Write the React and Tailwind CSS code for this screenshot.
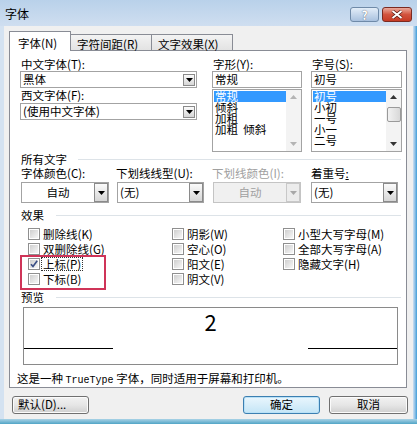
import React from "react";

// small dropdown arrow button used by the combo boxes
const DropBtn = ({ big, disabled }) => (
  <div
    className={`${big ? "w-[14px] h-[19px]" : "w-[12px] h-[12px] mr-[1px]"} shrink-0 flex items-center justify-center border ${
      disabled ? "border-[#c8c8c8] bg-[#ececec]" : "border-[#8a8a8a] bg-linear-to-b from-[#fbfbfb] to-[#d6d6d6]"
    }`}
  >
    <svg width="7" height="4" viewBox="0 0 7 4">
      <path d="M0 0h7L3.5 4z" fill={disabled ? "#a8a8a8" : "#000"} />
    </svg>
  </div>
);

const Combo = ({ text, w, big, center, disabled }) => (
  <div
    className={`${w} ${big ? "h-[21px]" : "h-[17px]"} flex items-center border ${
      disabled ? "border-[#c4c4c4] bg-[#f0f0f0] text-[#a0a0a0]" : "border-[#a3a3a3] bg-white"
    }`}
  >
    <span className={`flex-1 leading-none ${center ? "text-center" : "pl-[2px]"}`}>{text}</span>
    <DropBtn big={big} disabled={disabled} />
  </div>
);

const Check = ({ checked }) => (
  <span className="w-[12px] h-[12px] shrink-0 border border-[#8f8f8f] bg-white p-[1px] flex">
    <span className="flex-1 flex items-center justify-center bg-linear-to-br from-[#cfcfcf] to-[#f7f7f7]">
      {checked && (
        <svg width="8" height="8" viewBox="0 0 8 8">
          <path d="M1 4.2l2 2.3L7.2 0.8" stroke="#3b4f85" strokeWidth="1.7" fill="none" />
        </svg>
      )}
    </span>
  </span>
);

const Opt = ({ label, checked, focus }) => (
  <div className="flex items-center h-[15px] gap-[2px]">
    <Check checked={checked} />
    <span className={`px-[1px] leading-[12px] ${focus ? "outline outline-1 outline-dotted outline-[#333]" : ""}`}>
      {label}
    </span>
  </div>
);

const ListBox = ({ items, thumb }) => (
  <div className="h-[63px] mt-[1px] border border-[#a3a3a3] bg-white flex overflow-hidden">
    <div className="flex-1 pt-[1px] pl-[1px]">
      {items.map((t, i) => (
        <div
          key={i}
          className={`h-[11px] leading-[11px] pl-[1px] whitespace-pre ${i === 0 ? "bg-[#3399ff] text-white" : ""}`}
        >
          {t}
        </div>
      ))}
    </div>
    <div className="w-[15px] bg-[#f3f3f3] flex flex-col items-center py-[5px]">
      <svg width="7" height="4" viewBox="0 0 7 4">
        <path d="M0 4h7L3.5 0z" fill={thumb ? "#333" : "#b4b4b4"} />
      </svg>
      {thumb && (
        <div className="mt-[8px] w-[14px] h-[15px] border border-[#9a9a9a] rounded-[2px] bg-linear-to-r from-[#f2f2f2] to-[#d8d8d8]" />
      )}
      <div className="flex-1" />
      <svg width="7" height="4" viewBox="0 0 7 4">
        <path d="M0 0h7L3.5 4z" fill={thumb ? "#333" : "#b4b4b4"} />
      </svg>
    </div>
  </div>
);

const Section = ({ title, lineMl }) => (
  <div className="flex items-center h-[13px] pr-[5px]">
    <span className="leading-[13px] pl-[1px]">{title}</span>
    <div className={`flex-1 h-px bg-[#dde3e8] ${lineMl}`} />
  </div>
);

const Button = ({ children, w, primary }) => (
  <div
    className={`${w} h-[18px] rounded-[3px] border flex items-center justify-center leading-none ${
      primary
        ? "border-[#3c7fb1] bg-linear-to-b from-[#eaf6fd] to-[#c4e5f6] shadow-[inset_0_0_0_1px_#b9e1f7]"
        : "border-[#707070] bg-linear-to-b from-[#f2f2f2] via-[#e6e6e6] to-[#cfcfcf] shadow-[inset_0_0_0_1px_#fbfbfb]"
    }`}
  >
    {children}
  </div>
);

export default function App() {
  return (
    <div className="w-[417px] h-[424px] flex flex-col bg-[#c8d9ed] text-[11.5px] text-black font-['Noto_Sans_CJK_SC','Liberation_Sans',sans-serif]">
      {/* title bar */}
      <div className="h-[26px] flex items-start bg-linear-to-b from-[#b9d1ea] to-[#cfdef0]">
        <span className="pl-[5px] pt-[7px] text-[12px] leading-[14px]">字体</span>
        <div className="flex-1" />
        <div className="mt-[7px] w-[29px] h-[15px] rounded-[3px] border border-[#6f8aa8] bg-linear-to-b from-[#e3edf8] to-[#a9c1de] flex items-center justify-center">
          <span className="text-white text-[12px] font-bold leading-none [text-shadow:0_0_1px_#334]">?</span>
        </div>
        <div className="mt-[7px] ml-[3px] mr-[5px] w-[30px] h-[15px] rounded-[3px] border border-[#7b2a21] bg-linear-to-b from-[#e9a99c] via-[#d2533e] to-[#c63a24] flex items-center justify-center">
          <svg width="12" height="9" viewBox="0 0 12 9">
            <path d="M1.5 1l9 7M10.5 1l-9 7" stroke="#5a1a12" strokeWidth="3.4" />
            <path d="M1.5 1l9 7M10.5 1l-9 7" stroke="#fff" strokeWidth="2" />
          </svg>
        </div>
      </div>

      <div className="flex-1 flex">
        <div className="w-[4px] bg-[#d4e2f1]" />
        {/* client area */}
        <div className="flex-1 bg-[#f0f0f0] flex flex-col pt-[5px]">
          {/* tabs */}
          <div className="flex items-end h-[20px] ml-[5px] -mb-px relative z-10">
            <div className="w-[62px] h-[20px] border border-b-0 border-[#898c95] bg-white pl-[8px] pt-[5px] leading-[12px]">
              字体(N)
            </div>
            <div className="w-[81px] h-[17px] border border-l-0 border-[#898c95] bg-linear-to-b from-[#f3f3f3] to-[#e3e3e3] pl-[6px] pt-[3px] leading-[12px]">
              字符间距(R)
            </div>
            <div className="w-[81px] h-[17px] border border-l-0 border-[#898c95] bg-linear-to-b from-[#f3f3f3] to-[#e3e3e3] pl-[6px] pt-[3px] leading-[12px]">
              文字效果(X)
            </div>
          </div>

          {/* tab panel */}
          <div className="ml-[5px] w-[398px] h-[338px] border border-[#898c95] bg-white pl-[10px] flex flex-col">
            {/* font pickers */}
            <div className="flex pt-[6px]">
              <div className="w-[177px] mr-[15px]">
                <div className="h-[14px] leading-[14px] pl-[1px]">中文字体(T):</div>
                <Combo text="黑体" w="w-[177px]" />
                <div className="h-[15px] leading-[15px] pl-[1px]">西文字体(F):</div>
                <Combo text="(使用中文字体)" w="w-[177px]" />
              </div>
              <div className="w-[90px] mr-[9px]">
                <div className="h-[14px] leading-[14px] pl-[1px]">字形(Y):</div>
                <div className="h-[17px] border border-[#a3a3a3] pl-[2px] flex items-center">常规</div>
                <ListBox items={["常规", "倾斜", "加粗", "加粗  倾斜"]} />
              </div>
              <div className="w-[91px]">
                <div className="h-[14px] leading-[14px] pl-[1px]">字号(S):</div>
                <div className="h-[17px] border border-[#a3a3a3] pl-[2px] flex items-center">初号</div>
                <ListBox items={["初号", "小初", "一号", "小一", "二号"]} thumb />
              </div>
            </div>

            {/* all text */}
            <div className="mt-[1px]">
              <Section title="所有文字" lineMl="ml-[11px]" />
            </div>
            <div className="flex">
              <div className="w-[96px]">
                <div className="h-[14px] leading-[14px] pl-[1px]">字体颜色(C):</div>
                <div className="mt-[2px] ml-[1px]">
                  <Combo text="自动" w="w-[88px]" big center />
                </div>
              </div>
              <div className="w-[96px]">
                <div className="h-[14px] leading-[14px] whitespace-nowrap">下划线线型(U):</div>
                <div className="mt-[2px] ml-[1px]">
                  <Combo text="(无)" w="w-[87px]" big />
                </div>
              </div>
              <div className="w-[99px]">
                <div className="h-[14px] leading-[14px] whitespace-nowrap text-[#a0a0a0]">下划线颜色(I):</div>
                <div className="mt-[2px] ml-[1px]">
                  <Combo text="自动" w="w-[88px]" big center disabled />
                </div>
              </div>
              <div className="flex-1">
                <div className="h-[14px] leading-[14px]">
                  着重号<span className="underline">:</span>
                </div>
                <div className="mt-[2px]">
                  <Combo text="(无)" w="w-[87px]" big />
                </div>
              </div>
            </div>

            {/* effects */}
            <div className="mt-[6px]">
              <Section title="效果" lineMl="ml-[12px]" />
            </div>
            <div className="relative mt-[4px] pl-[8px] flex">
              <div className="w-[144px]">
                <Opt label="删除线(K)" />
                <Opt label="双删除线(G)" />
                <Opt label="上标(P)" checked focus />
                <Opt label="下标(B)" />
              </div>
              <div className="w-[111px]">
                <Opt label="阴影(W)" />
                <Opt label="空心(O)" />
                <Opt label="阳文(E)" />
                <Opt label="阴文(V)" />
              </div>
              <div>
                <Opt label="小型大写字母(M)" />
                <Opt label="全部大写字母(A)" />
                <Opt label="隐藏文字(H)" />
              </div>
              {/* red annotation box */}
              <div className="absolute left-0 top-[29px] w-[86px] h-[35px] border-2 border-[#cf3458]" />
            </div>

            {/* preview */}
            <div className="mt-[5px]">
              <Section title="预览" lineMl="ml-[12px]" />
            </div>
            <div className="mt-[3px] ml-[3px] w-[375px] h-[59px] border border-[#8a8a8a] flex flex-col">
              <div className="text-center text-[22px] leading-[22px] pt-[2px]">2</div>
              <div className="flex justify-between mt-[16px]">
                <div className="w-[89px] h-px bg-black" />
                <div className="w-[89px] h-px bg-black" />
              </div>
            </div>
            <div className="mt-[7px] -ml-[3px] leading-[13px]">
              这是一种 <span className="font-['Liberation_Mono',monospace] text-[10px]">TrueType</span> 字体，同时适用于屏幕和打印机。
            </div>
          </div>

          {/* buttons */}
          <div className="flex mt-[8px] ml-[8px] mr-[5px]">
            <Button w="w-[77px]">
              <span className="w-full pl-[5px]">默认(D)...</span>
            </Button>
            <div className="flex-1" />
            <Button w="w-[77px]" primary>
              确定
            </Button>
            <div className="w-[9px]" />
            <Button w="w-[79px]">取消</Button>
          </div>
        </div>
        <div className="w-[4px] bg-linear-to-r from-[#cfe0f1] to-[#3d9ed9]" />
      </div>
      <div className="h-[5px] bg-linear-to-b from-[#a9d3e6] to-[#4fa4c6]" />
    </div>
  );
}
